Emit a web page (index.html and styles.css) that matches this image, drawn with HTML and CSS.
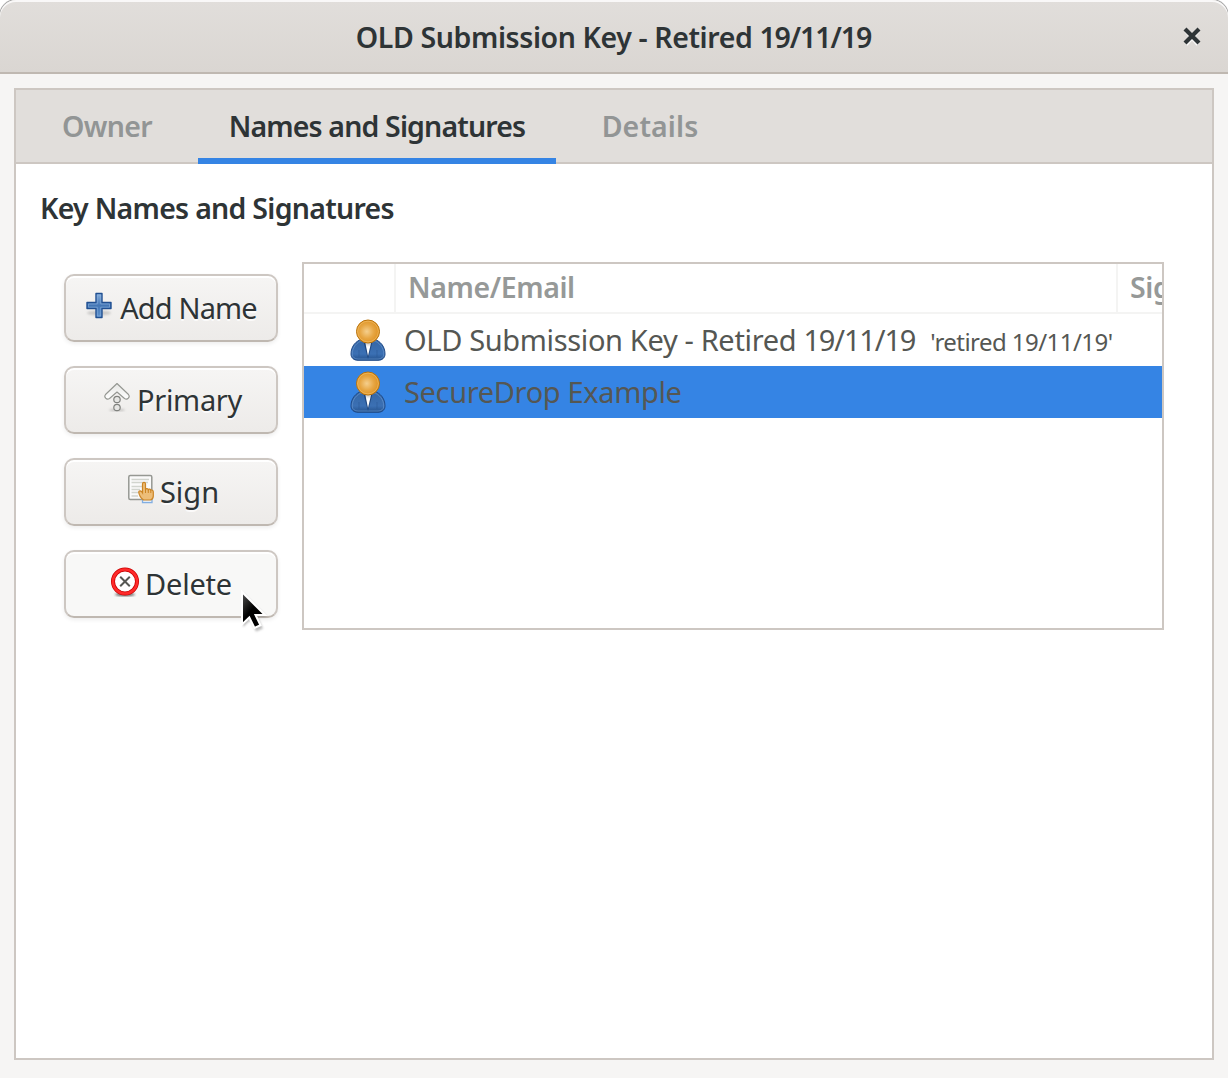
FILE: index.html
```html
<!DOCTYPE html>
<html lang="en">
<head>
<meta charset="utf-8">
<title>OLD Submission Key - Retired 19/11/19</title>
<link rel="stylesheet" href="styles.css">
</head>
<body>
<svg class="defs" width="0" height="0" aria-hidden="true">
  <defs>
    <radialGradient id="face" cx=".45" cy=".5" r=".55"><stop offset="0" stop-color="#f5cf8d"/><stop offset=".55" stop-color="#e7a643"/><stop offset="1" stop-color="#dd9020"/></radialGradient>
    <linearGradient id="coat" x1="0" y1="0" x2="0" y2="1"><stop offset="0" stop-color="#3566a4"/><stop offset=".7" stop-color="#3b70b4"/><stop offset="1" stop-color="#24518c"/></linearGradient>
    <linearGradient id="shirt" x1="0" y1="0" x2="0" y2="1"><stop offset="0" stop-color="#aaa"/><stop offset=".4" stop-color="#fff"/></linearGradient>
    <linearGradient id="blue" x1="0" y1="0" x2="0" y2="1"><stop offset="0" stop-color="#8ab0dc"/><stop offset=".5" stop-color="#4477b6"/><stop offset="1" stop-color="#5f92cd"/></linearGradient>
    <linearGradient id="metal" x1="0" y1="0" x2="0" y2="1"><stop offset="0" stop-color="#e6e6e4"/><stop offset="1" stop-color="#fff"/></linearGradient>
    <linearGradient id="ink" x1="0" y1="0" x2=".8" y2="1"><stop offset="0" stop-color="#555"/><stop offset=".5" stop-color="#000"/></linearGradient>
    <filter id="soft" x="-30%" y="-100%" width="160%" height="300%"><feGaussianBlur stdDeviation="1.3"/></filter>
    <symbol id="person" viewBox="0 0 36 42">
      <path d="M1 35C1 27 6 22 12 20H24C30 22 35 27 35 35C35 39 32 41.3 28 41.3H8C4 41.3 1 39 1 35Z" fill="url(#coat)" stroke="#204a87"/>
      <path d="M2.200 35C2.400 28 7 23.500 12 21.500M24 21.500C29 23.500 33.600 28 33.800 35C33.800 38.500 31 40 28 40H8C5 40 2.200 38.500 2.200 35" fill="none" stroke="#6d9bd2" stroke-width=".8" opacity=".75"/>
      <path d="M9 31V38M27 31V38" stroke="#28558f" stroke-width="1" opacity=".5"/>
      <path d="M13 21L18 40L23 21Z" fill="#1e467f"/>
      <path d="M15 22H21.500L18 37Z" fill="url(#shirt)"/>
      <circle cx="18" cy="12.500" r="11.500" fill="url(#face)" stroke="#b9720a"/>
      <circle cx="18" cy="12.500" r="10.400" fill="none" stroke="#f4c26c" stroke-width=".8" opacity=".8"/>
    </symbol>
  </defs>
</svg>
<div class="window">
  <header class="titlebar">
    <h1 class="title">OLD Submission Key - Retired <span class="date">19/11/19</span></h1>
    <svg class="close" width="18" height="19" viewBox="0 0 18 19"><path d="M3 4L15 17.500M15 4L3 17.500" stroke="#fff" stroke-width="4" opacity=".8"/><path d="M2 2L16 16M16 2L2 16" stroke="#2e3436" stroke-width="4.200"/></svg>
  </header>
  <main class="notebook">
    <nav class="tabs">
      <div class="tab tab-owner"><span>Owner</span></div>
      <div class="tab tab-names active"><span>Names and Signatures</span></div>
      <div class="tab tab-details"><span>Details</span></div>
    </nav>
    <section class="page">
      <h2 class="heading">Key Names and Signatures</h2>
      <div class="content">
        <div class="actions">
          <button class="button add">
            <svg width="28" height="28" viewBox="0 0 28 28"><ellipse cx="14" cy="21" rx="12" ry="2.500" fill="#777" opacity=".3" filter="url(#soft)"/><path d="M11 1.500H17V10.500H26V16.500H17V25.500H11V16.500H2V10.500H11Z" fill="url(#blue)" stroke="#204f91" stroke-width="1.400" stroke-linejoin="round"/><path d="M12.300 3H15.700V12H24.500V15.200H15.700V24H12.300V15.200H3.500V12H12.300Z" fill="none" stroke="#8db3df" stroke-width=".9" opacity=".6"/></svg>
            <span>Add Name</span></button>
          <button class="button primary">
            <svg width="28" height="30" viewBox="0 0 28 30"><ellipse cx="14" cy="28" rx="8" ry="1.500" fill="#777" opacity=".35" filter="url(#soft)"/><path d="M14 1.500L25.500 12.500C27.500 15 24.500 18.500 21.500 16.500L14 10L6.500 16.500C3.500 18.500 .5 15 2.500 12.500Z" fill="url(#metal)" stroke="#949691" stroke-width="1.100" stroke-linejoin="round"/><circle cx="14" cy="17.500" r="3.200" fill="#e6e6e4" stroke="#80827e" stroke-width="1.200"/><circle cx="14" cy="25.500" r="3.200" fill="#e6e6e4" stroke="#80827e" stroke-width="1.200"/></svg>
            <span>Primary</span></button>
          <button class="button sign">
            <svg width="28" height="30" viewBox="0 0 28 30"><rect x="1.800" y="1.500" width="23" height="24" rx="1.500" fill="#fafafa" stroke="#969893" stroke-width="1.500"/><path d="M4.500 5.500H22M4.500 8.500H21M4.500 12.500H15M4.500 15.500H13M4.500 18.500H12M4.500 22H11" stroke="#d1d4ce" stroke-width="1.300"/><path d="M15.500 25.500H25V28.500H15.500Z" fill="#fff" stroke="#82aee1" stroke-width="1.300"/><path d="M15.500 10C15.500 7.700 18.500 7.700 18.500 10V15.500C19 14.200 21 14.300 21.300 15.700C22 14.700 23.600 15 23.800 16.300C25 15.500 26.300 16.400 26.300 18V22C26.300 24 25 25.500 23.500 26H16.500C14 24 12 21 11.800 18.200C11.700 16.500 14 16 15.500 18.700Z" fill="#edbd78" stroke="#cc8423" stroke-width="1.200"/><path d="M18.500 15V19M21.300 16V19M23.800 16.500V19" stroke="#cc8423"/></svg>
            <span>Sign</span></button>
          <button class="button delete">
            <svg width="30" height="30" viewBox="0 0 30 30"><ellipse cx="15" cy="27.500" rx="10" ry="1.700" fill="#333" opacity=".7" filter="url(#soft)"/><circle cx="15" cy="14.500" r="12" fill="#fff" stroke="#c80000" stroke-width="4"/><circle cx="15" cy="14.500" r="12" fill="none" stroke="#ff2a2a" stroke-width="2.600"/><path d="M10.200 9.700L19.800 19.300M19.800 9.700L10.200 19.300" stroke="#555753" stroke-width="2"/></svg>
            <span>Delete</span>
            <svg class="pointer" width="34" height="46" viewBox="0 0 34 46"><path d="M4 4V38L11.500 31L17 42.500L24 39.500L18.500 28H28Z" fill="#777" opacity=".5" filter="url(#soft)"/><path d="M3 3V35.500L10.300 28.500L15.500 39L21.500 36.200L16.500 26H26Z" fill="url(#ink)" stroke="#fff" stroke-width="2"/></svg>
          </button>
        </div>
        <div class="tree">
          <div class="row head"><div class="cell icon-cell"></div><div class="cell name-cell"><span>Name/Email</span></div><div class="cell last-cell"><span>Signature ID</span></div></div>
          <div class="row"><svg class="person" width="36" height="42"><use href="#person"/></svg><span class="name">OLD Submission Key - Retired <span class="date">19/11/19</span></span><span class="comment">'retired 19/11/19'</span></div>
          <div class="row selected"><svg class="person" width="36" height="42"><use href="#person"/></svg><span class="name">SecureDrop Example</span></div>
        </div>
      </div>
    </section>
  </main>
</div>
</body>
</html>
```
FILE: styles.css
```css
* { box-sizing: border-box; }
body { margin: 0; background: #fff; color: #2e3436; font: 29px/40px "Noto Sans", sans-serif; white-space: nowrap; }
.defs { display: block; height: 0; }
.window { height: 1078px; display: flex; flex-direction: column; background: #f6f5f4; border-radius: 16px 16px 0 0; overflow: hidden; box-shadow: 0 0 0 1px #aaa; }
.titlebar { height: 74px; flex: none; display: grid; grid-template-columns: 1fr auto 1fr; align-items: center; padding-right: 27px; border-bottom: 2px solid #bfb8b1; border-radius: 16px 16px 0 0; background: linear-gradient(#e1dedb, #dad6d2); box-shadow: inset 0 2px #f9f8f8; }
.title { grid-column: 2; margin: 2px 0 0 26px; font-size: 28.500px; font-weight: 600; line-height: 40px; letter-spacing: -.4px; }
.title .date { letter-spacing: -1.100px; }
.close { justify-self: end; margin-top: 1px; }
.notebook { flex: 1; margin: 14px 14px 18px; border: 2px solid #cdc7c2; background: #fff; }
.tabs { height: 74px; display: flex; background: #e1dedb; box-shadow: inset 0 -2px #cdc7c2; font-size: 28.500px; font-weight: 600; color: #929595; }
.tab { display: flex; justify-content: center; padding-top: 16px; }
.tab-owner { width: 182px; letter-spacing: -.7px; }
.tab-names { width: 358px; letter-spacing: -.850px; }
.tab-details { width: 188px; letter-spacing: .1px; }
.active { color: #2e3436; border-bottom: 6px solid #3584e4; }
.page { padding: 24px 48px; }
.heading { margin: 0 0 0 -24px; font-size: 28.500px; font-weight: 600; line-height: 40px; letter-spacing: -.720px; }
.content { display: flex; gap: 24px; padding-top: 34px; }
.actions { width: 214px; padding-top: 12px; display: flex; flex-direction: column; gap: 24px; }
.button { position: relative; height: 68px; display: flex; align-items: center; justify-content: center; gap: 7px; padding: 0 0 1px; font: inherit; color: #2e3436; border: 2px solid #cdc7c2; border-bottom-color: #bfb8b1; border-radius: 10px; background: linear-gradient(#f6f5f4, #edebe9); box-shadow: inset 0 2px #fff, 0 2px 4px #00000012; text-shadow: 0 2px #ffffffc0; }
.button svg { flex: none; margin-bottom: 3px; }
.add { letter-spacing: -.850px; }
.primary { gap: 6px; padding-left: 3px; letter-spacing: -.3px; }
.sign { gap: 5px; padding-left: 4px; }
.button.primary svg, .button.sign svg { margin-bottom: 5px; }
.delete { gap: 5px; background: #f8f8f7; letter-spacing: -.2px; }
.button .pointer { position: absolute; left: 173px; top: 37px; }
.tree { width: 862px; height: 368px; border: 2px solid #cdc7c2; overflow: hidden; }
.row { height: 52px; display: flex; align-items: center; padding-left: 46px; color: #555753; }
.row.head { height: 50px; padding: 0; align-items: stretch; font-size: 28.500px; font-weight: 600; color: #969998; border-bottom: 2px solid #f4f4f3; letter-spacing: -.4px; }
.cell { flex: none; border-right: 2px solid #f4f4f3; padding: 3px 0 0 12px; }
.icon-cell { width: 92px; }
.name-cell { width: 722px; }
.last-cell { width: 210px; }
.person { flex: none; }
.name { margin-left: 18px; letter-spacing: -.350px; }
.name .date { letter-spacing: -1.150px; }
.comment { margin-left: 15px; padding-top: 3px; font-size: 24px; letter-spacing: -.550px; }
.selected { background: #3584e4; }
```
